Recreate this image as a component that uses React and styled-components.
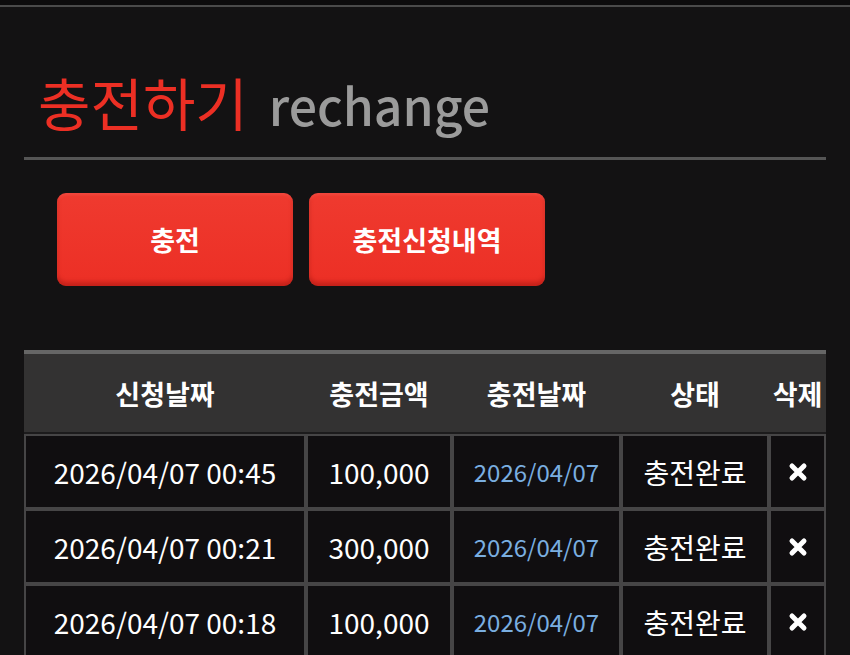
import React from 'react';
import styled, { createGlobalStyle } from 'styled-components';

const GlobalStyle = createGlobalStyle`
  html, body {
    margin: 0;
    padding: 0;
    background: #131213;
    font-family: "Noto Sans CJK KR", "Noto Sans", sans-serif;
    color: #fff;
  }
`;

const rows = [
  { applied: '2026/04/07 00:45', amount: '100,000', charged: '2026/04/07', status: '충전완료' },
  { applied: '2026/04/07 00:21', amount: '300,000', charged: '2026/04/07', status: '충전완료' },
  { applied: '2026/04/07 00:18', amount: '100,000', charged: '2026/04/07', status: '충전완료' },
];

function DeleteIcon() {
  return (
    <svg width="20" height="20" viewBox="0 0 20 20">
      <path d="M4 4 L16 16 M16 4 L4 16" stroke="#fff" strokeWidth="5" strokeLinecap="round" />
    </svg>
  );
}

function App() {
  return (
    <>
      <GlobalStyle />
      <TopBar />
      <Page>
        <TitleRow>
          <TitleKo>충전하기</TitleKo>
          <TitleEn>rechange</TitleEn>
        </TitleRow>
        <Divider />
        <ButtonGroup>
          <RedButton>충전</RedButton>
          <RedButton>충전신청내역</RedButton>
        </ButtonGroup>
        <Table>
          <colgroup>
            <col style={{ width: 282 }} />
            <col style={{ width: 146 }} />
            <col style={{ width: 169 }} />
            <col style={{ width: 148 }} />
            <col style={{ width: 57 }} />
          </colgroup>
          <thead>
            <tr>
              <Th>신청날짜</Th>
              <Th>충전금액</Th>
              <Th>충전날짜</Th>
              <Th>상태</Th>
              <Th>삭제</Th>
            </tr>
          </thead>
          <tbody>
            {rows.map((r, i) => (
              <tr key={i}>
                <Td>{r.applied}</Td>
                <Td>{r.amount}</Td>
                <Td $blue>{r.charged}</Td>
                <Td>{r.status}</Td>
                <Td><DeleteIcon /></Td>
              </tr>
            ))}
          </tbody>
        </Table>
      </Page>
    </>
  );
}

export default App;

const TopBar = styled.div`
  height: 5px;
  background: #0c0b0c;
  border-bottom: 2px solid #4a4a4a;
`;

const Page = styled.div`
  padding: 0 24px;
`;

const TitleRow = styled.div`
  display: flex;
  align-items: baseline;
  gap: 21px;
  padding: 60px 0 0 14px;
  box-sizing: border-box;
  height: 150px;
`;

const TitleKo = styled.span`
  color: #ec2f24;
  font-size: 57px;
  line-height: 1.2;
`;

const TitleEn = styled.span`
  color: #9b9b9b;
  font-size: 50px;
  font-weight: 500;
  line-height: 1.2;
`;

const Divider = styled.div`
  height: 3px;
  background: #555;
`;

const ButtonGroup = styled.div`
  display: flex;
  gap: 16px;
  padding: 33px 0 0 33px;
  height: 190px;
  box-sizing: border-box;
`;

const RedButton = styled.div`
  width: 236px;
  height: 93px;
  display: flex;
  align-items: center;
  justify-content: center;
  background: linear-gradient(#ef3a2f, #ec2f25);
  border-radius: 9px;
  box-shadow: inset 0 -4px 4px rgba(120, 10, 5, 0.35), inset 0 2px 3px rgba(255, 120, 110, 0.25);
  color: #fff;
  font-size: 27px;
  font-weight: 700;
  cursor: pointer;
`;

const Table = styled.table`
  width: 802px;
  table-layout: fixed;
  border-collapse: separate;
  border-spacing: 0;
`;

const Th = styled.th`
  height: 78px;
  background: #333232;
  border-top: 4px solid #666;
  border-bottom: 2px solid #1c1b1c;
  color: #fff;
  font-size: 27px;
  font-weight: 700;
  text-align: center;
  padding: 0;
`;

const Td = styled.td`
  height: 71px;
  background: #100e10;
  border: 2px solid #464546;
  color: ${p => (p.$blue ? '#7aaee0' : '#fff')};
  font-size: ${p => (p.$blue ? '24px' : '28px')};
  text-align: center;
  padding: 0;
  svg {
    display: block;
    margin: 0 auto;
  }
`;
